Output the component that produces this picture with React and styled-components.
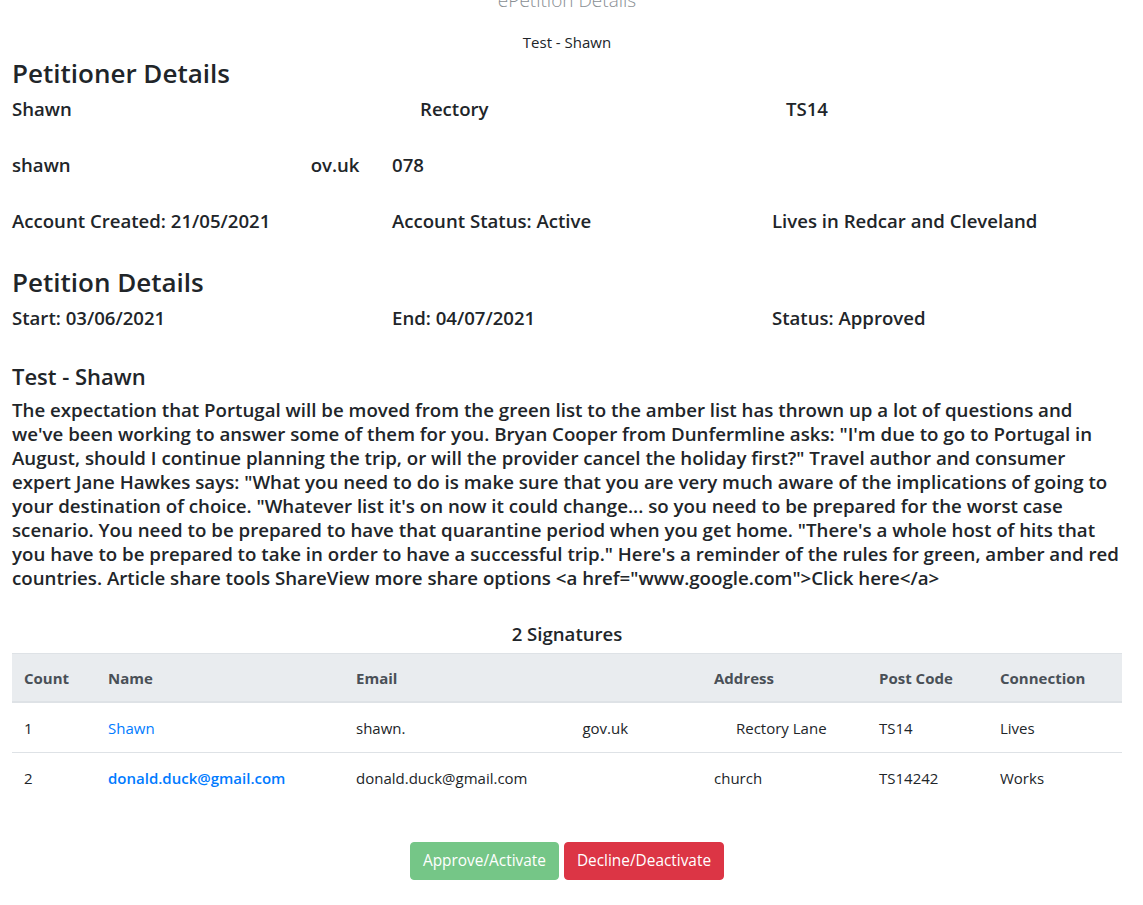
import React from "react";
import styled, { createGlobalStyle } from "styled-components";

const GlobalStyle = createGlobalStyle`
  html, body {
    margin: 0;
    padding: 0;
    background: #fff;
  }
  body {
    font-family: "Open Sans", "Noto Sans", sans-serif;
    color: #212529;
  }
`;

const Page = styled.div`
  padding: 0 21px 40px 12px;
`;

const PageTitle = styled.div`
  margin-top: -14px;
  text-align: center;
  font-size: 19px;
  font-weight: 300;
  color: #8a8f94;
  line-height: 28px;
`;

const SubTitle = styled.div`
  margin-top: 18px;
  text-align: center;
  font-size: 15px;
  line-height: 20px;
`;

const SectionTitle = styled.h2`
  margin: ${(p) => p.$top || "0"} 0 0;
  font-size: 26px;
  font-weight: 600;
  line-height: 36px;
`;

const InfoRow = styled.div`
  display: grid;
  grid-template-columns: ${(p) => p.$cols || "380px 380px 1fr"};
  margin: ${(p) => p.$top || "0"} 0 0;
  font-size: 18.6px;
  font-weight: 600;
  line-height: 24px;
`;

const Cell = styled.div`
  white-space: nowrap;
`;

const Gap = styled.span`
  display: inline-block;
  width: ${(p) => p.$w};
`;

const StoryTitle = styled.h3`
  margin: 31px 0 0;
  font-size: 22px;
  font-weight: 600;
  line-height: 30px;
`;

const Story = styled.p`
  margin: 7px 0 0;
  font-size: 18.7px;
  font-weight: 600;
  line-height: 24px;
`;

const TableCaption = styled.div`
  margin-top: 32px;
  text-align: center;
  font-size: 18.6px;
  font-weight: 600;
  line-height: 24px;
`;

const Table = styled.table`
  width: 100%;
  table-layout: fixed;
  margin-top: 7px;
  border-collapse: collapse;
  font-size: 15px;
`;

const Th = styled.th`
  background: #e9ecef;
  color: #495057;
  text-align: left;
  font-weight: 700;
  padding: 0 12px;
  height: 47px;
  border-top: 1px solid #dee2e6;
  border-bottom: 2px solid #dee2e6;
`;

const Td = styled.td`
  padding: 0 12px 0 ${(p) => p.$indent || "12px"};
  height: 49px;
  border-top: 1px solid #dee2e6;
  white-space: nowrap;
  color: #212529;
`;

const NameLink = styled.a`
  color: #007bff;
  text-decoration: none;
  font-weight: ${(p) => (p.$bold ? 600 : 500)};
`;

const Actions = styled.div`
  display: flex;
  justify-content: center;
  gap: 5px;
  margin-top: 40px;
`;

const Btn = styled.button`
  font-family: inherit;
  font-size: 15.4px;
  line-height: 24px;
  padding: 6px 12px;
  border: 1px solid ${(p) => p.$bg};
  border-radius: 4px;
  background: ${(p) => p.$bg};
  color: #fff;
  cursor: ${(p) => (p.disabled ? "default" : "pointer")};
`;

const story = `The expectation that Portugal will be moved from the green list to the amber list has thrown up a lot of questions and we've been working to answer some of them for you. Bryan Cooper from Dunfermline asks: "I'm due to go to Portugal in August, should I continue planning the trip, or will the provider cancel the holiday first?" Travel author and consumer expert Jane Hawkes says: "What you need to do is make sure that you are very much aware of the implications of going to your destination of choice. "Whatever list it's on now it could change... so you need to be prepared for the worst case scenario. You need to be prepared to have that quarantine period when you get home. "There's a whole host of hits that you have to be prepared to take in order to have a successful trip." Here's a reminder of the rules for green, amber and red countries. Article share tools ShareView more share options <a href="www.google.com">Click here</a>`;

const signatures = [
  { n: 1, name: "Shawn", email: ["shawn.", "gov.uk"], address: "Rectory Lane", indent: "34px", post: "TS14", conn: "Lives", bold: false },
  { n: 2, name: "donald.duck@gmail.com", email: ["donald.duck@gmail.com"], address: "church", post: "TS14242", conn: "Works", bold: true },
];

export default function App() {
  return (
    <>
      <GlobalStyle />
      <Page>
        <PageTitle>ePetition Details</PageTitle>
        <SubTitle>Test - Shawn</SubTitle>

        <SectionTitle $top="3px">Petitioner Details</SectionTitle>
        <InfoRow $cols="408px 366px 1fr" $top="6px">
          <Cell>Shawn</Cell>
          <Cell>Rectory</Cell>
          <Cell>TS14</Cell>
        </InfoRow>
        <InfoRow $top="32px">
          <Cell>
            shawn<Gap $w="240px" />ov.uk
          </Cell>
          <Cell>078</Cell>
          <Cell />
        </InfoRow>
        <InfoRow $top="32px">
          <Cell>Account Created: 21/05/2021</Cell>
          <Cell>Account Status: Active</Cell>
          <Cell>Lives in Redcar and Cleveland</Cell>
        </InfoRow>

        <SectionTitle $top="31px">Petition Details</SectionTitle>
        <InfoRow $top="6px">
          <Cell>Start: 03/06/2021</Cell>
          <Cell>End: 04/07/2021</Cell>
          <Cell>Status: Approved</Cell>
        </InfoRow>

        <StoryTitle>Test - Shawn</StoryTitle>
        <Story>{story}</Story>

        <TableCaption>2 Signatures</TableCaption>
        <Table>
          <colgroup>
            <col style={{ width: 84 }} />
            <col style={{ width: 248 }} />
            <col style={{ width: 358 }} />
            <col style={{ width: 165 }} />
            <col style={{ width: 121 }} />
            <col />
          </colgroup>
          <thead>
            <tr>
              <Th>Count</Th>
              <Th>Name</Th>
              <Th>Email</Th>
              <Th>Address</Th>
              <Th>Post Code</Th>
              <Th>Connection</Th>
            </tr>
          </thead>
          <tbody>
            {signatures.map((s) => (
              <tr key={s.n}>
                <Td>{s.n}</Td>
                <Td>
                  <NameLink href="#" $bold={s.bold}>{s.name}</NameLink>
                </Td>
                <Td>
                  {s.email[0]}
                  {s.email[1] && (
                    <>
                      <Gap $w="177px" />
                      {s.email[1]}
                    </>
                  )}
                </Td>
                <Td $indent={s.indent}>{s.address}</Td>
                <Td>{s.post}</Td>
                <Td>{s.conn}</Td>
              </tr>
            ))}
          </tbody>
        </Table>

        <Actions>
          <Btn $bg="#75c687" disabled>Approve/Activate</Btn>
          <Btn $bg="#dc3545">Decline/Deactivate</Btn>
        </Actions>
      </Page>
    </>
  );
}
